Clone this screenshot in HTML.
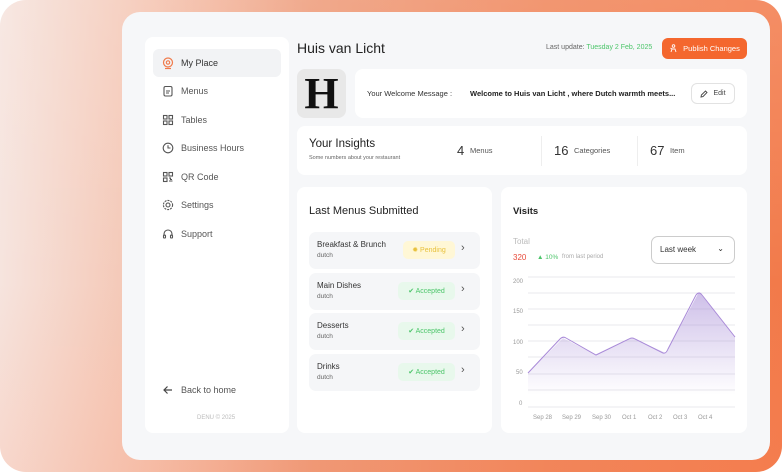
<!DOCTYPE html>
<html><head><meta charset="utf-8"><style>
*{margin:0;padding:0;box-sizing:border-box}
body{width:782px;height:472px;overflow:hidden;background:#fff;font-family:"Liberation Sans",sans-serif;position:relative}
.bg{position:absolute;left:0;top:0;width:782px;height:472px;border-radius:26px;background:linear-gradient(90deg,#f6e4de 0%,#f4c2ae 20%,#ee9a78 40%,#f08458 70%,#f27a4a 100%)}
.bg2{position:absolute;left:0;top:0;width:782px;height:472px;border-radius:26px;background:linear-gradient(180deg,rgba(255,255,255,0.15),rgba(255,255,255,0) 60%,rgba(255,140,100,0.15))}
.panel{position:absolute;left:122px;top:12px;width:648px;height:448px;background:#f6f7f9;border-radius:18px}
.side{position:absolute;left:145px;top:37px;width:144px;height:396px;background:#fff;border-radius:8px}
.nav{position:absolute;left:8px;width:128px;height:28px;display:flex;align-items:center;font-size:9px;color:#555;border-radius:6px}
.nav svg{margin-left:9px;margin-right:7px}
.card{position:absolute;background:#fff;border-radius:8px}
.t{position:absolute;white-space:nowrap}
.row{position:absolute;left:12px;width:171px;height:37px;background:#f5f6f8;border-radius:7px}
.badge{position:absolute;top:9px;height:18px;border-radius:5px;font-size:7px;display:flex;align-items:center;justify-content:center;gap:4px}
.chev{position:absolute;left:152px;top:10px;font-size:11px;color:#555}
</style></head><body>
<div class="bg"></div><div class="bg2"></div>
<div class="panel"></div>
<div class="side">
 <div class="nav" style="top:12px;background:#f2f3f5;color:#333"><svg width="12" height="13" viewBox="0 0 12 13"><circle cx="6" cy="5.5" r="4.5" fill="none" stroke="#f07a4a" stroke-width="1.2"/><circle cx="6" cy="5.5" r="1.7" fill="none" stroke="#f07a4a" stroke-width="1.1"/><path d="M3 11.5h6" stroke="#f07a4a" stroke-width="1.2"/></svg>My Place</div>
 <div class="nav" style="top:40px"><svg width="12" height="12" viewBox="0 0 12 12"><rect x="2" y="1.5" width="8" height="9.5" rx="1.5" fill="none" stroke="#555" stroke-width="1.1"/><path d="M4 6h4M4 8h3" stroke="#555"/></svg>Menus</div>
 <div class="nav" style="top:69px"><svg width="12" height="12" viewBox="0 0 12 12" fill="none" stroke="#555" stroke-width="1.1"><rect x="1.5" y="1.5" width="3.5" height="3.5"/><rect x="7" y="1.5" width="3.5" height="3.5"/><rect x="1.5" y="7" width="3.5" height="3.5"/><rect x="7" y="7" width="3.5" height="3.5"/></svg>Tables</div>
 <div class="nav" style="top:97px"><svg width="12" height="12" viewBox="0 0 12 12" fill="none" stroke="#555" stroke-width="1.1"><circle cx="6" cy="6" r="4.8"/><path d="M6 3.2V6h2.5"/></svg>Business Hours</div>
 <div class="nav" style="top:126px"><svg width="12" height="12" viewBox="0 0 12 12" fill="none" stroke="#555" stroke-width="1.1"><rect x="1.5" y="1.5" width="3.5" height="3.5"/><rect x="7" y="1.5" width="3.5" height="3.5"/><rect x="1.5" y="7" width="3.5" height="3.5"/><path d="M7 7h1.5v1.5H10M7 10h3.5"/></svg>QR Code</div>
 <div class="nav" style="top:154px"><svg width="12" height="12" viewBox="0 0 12 12" fill="none" stroke="#555" stroke-width="1.1"><circle cx="6" cy="6" r="2"/><circle cx="6" cy="6" r="4.6" stroke-dasharray="2 1"/></svg>Settings</div>
 <div class="nav" style="top:183px"><svg width="12" height="12" viewBox="0 0 12 12" fill="none" stroke="#555" stroke-width="1.1"><path d="M2 8V6a4 4 0 0 1 8 0v2"/><rect x="1.5" y="7" width="2" height="3" rx=".8"/><rect x="8.5" y="7" width="2" height="3" rx=".8"/></svg>Support</div>
 <div class="nav" style="top:339px"><svg width="12" height="12" viewBox="0 0 12 12" fill="none" stroke="#444" stroke-width="1.2"><path d="M10 6H2M5.5 2.5 2 6l3.5 3.5"/></svg>Back to home</div>
 <div class="t" style="left:52px;top:378px;font-size:6px;color:#bbb">DENU © 2025</div>
</div>

<div class="t" style="left:297px;top:40px;font-size:14px;color:#222">Huis van Licht</div>
<div class="t" style="left:546px;top:44px;font-size:7px;color:#666">Last update: <span style="color:#4cc56a">Tuesday 2 Feb, 2025</span></div>
<div style="position:absolute;left:662px;top:38px;width:85px;height:21px;background:#f4672e;border-radius:6px;color:#fff;font-size:7.5px;display:flex;align-items:center;justify-content:center;gap:5px"><svg width="9" height="9" viewBox="0 0 9 9" fill="none" stroke="#fff" stroke-width=".9"><circle cx="4.5" cy="2" r="1.3"/><path d="M2 8l1-3h3l1 3M3 5l-1.5-1"/></svg>Publish Changes</div>

<div style="position:absolute;left:297px;top:69px;width:49px;height:49px;background:#e8e8e8;border-radius:8px;font-family:'Liberation Serif',serif;font-weight:bold;font-size:44px;color:#111;text-align:center;line-height:49px">H</div>
<div class="card" style="left:355px;top:69px;width:392px;height:49px">
 <div class="t" style="left:12px;top:20px;font-size:7.5px;color:#333">Your Welcome Message :</div>
 <div class="t" style="left:115px;top:20px;font-size:7.5px;color:#222;font-weight:bold">Welcome to Huis van Licht , where Dutch warmth meets...</div>
 <div style="position:absolute;left:336px;top:14px;width:44px;height:21px;border:1px solid #e2e2e2;border-radius:6px;font-size:7px;color:#444;display:flex;align-items:center;justify-content:center;gap:5px"><svg width="8" height="8" viewBox="0 0 8 8" fill="none" stroke="#444" stroke-width=".9"><path d="M1 7l.4-2L5.5 1 7 2.5 3 6.6z"/></svg>Edit</div>
</div>

<div class="card" style="left:297px;top:126px;width:450px;height:49px">
 <div class="t" style="left:12px;top:12px;font-size:11.5px;color:#222">Your Insights</div>
 <div class="t" style="left:12px;top:29px;font-size:5.5px;color:#666">Some numbers about your restaurant</div>
 <div class="t" style="left:160px;top:17px;font-size:13px;color:#333">4</div><div class="t" style="left:173px;top:20px;font-size:7.5px;color:#555">Menus</div>
 <div style="position:absolute;left:244px;top:10px;width:1px;height:30px;background:#eee"></div>
 <div class="t" style="left:257px;top:17px;font-size:13px;color:#333">16</div><div class="t" style="left:277px;top:20px;font-size:7.5px;color:#555">Categories</div>
 <div style="position:absolute;left:340px;top:10px;width:1px;height:30px;background:#eee"></div>
 <div class="t" style="left:353px;top:17px;font-size:13px;color:#333">67</div><div class="t" style="left:373px;top:20px;font-size:7.5px;color:#555">Item</div>
</div>

<div class="card" style="left:297px;top:187px;width:195px;height:246px">
 <div class="t" style="left:12px;top:18px;font-size:11px;color:#222">Last Menus Submitted</div>
 <div class="row" style="top:45px"><div class="t" style="left:8px;top:8px;font-size:8px;color:#333">Breakfast &amp; Brunch</div><div class="t" style="left:8px;top:20px;font-size:6.5px;color:#666">dutch</div><div class="badge" style="left:94px;width:52px;background:#fff7d6;color:#e8c13c">✹ Pending</div><div class="chev">›</div></div>
 <div class="row" style="top:86px"><div class="t" style="left:8px;top:8px;font-size:8px;color:#333">Main Dishes</div><div class="t" style="left:8px;top:20px;font-size:6.5px;color:#666">dutch</div><div class="badge" style="left:89px;width:57px;background:#e8f8ec;color:#4cc56a">✔ Accepted</div><div class="chev">›</div></div>
 <div class="row" style="top:126px"><div class="t" style="left:8px;top:8px;font-size:8px;color:#333">Desserts</div><div class="t" style="left:8px;top:20px;font-size:6.5px;color:#666">dutch</div><div class="badge" style="left:89px;width:57px;background:#e8f8ec;color:#4cc56a">✔ Accepted</div><div class="chev">›</div></div>
 <div class="row" style="top:167px"><div class="t" style="left:8px;top:8px;font-size:8px;color:#333">Drinks</div><div class="t" style="left:8px;top:20px;font-size:6.5px;color:#666">dutch</div><div class="badge" style="left:89px;width:57px;background:#e8f8ec;color:#4cc56a">✔ Accepted</div><div class="chev">›</div></div>
</div>

<div class="card" style="left:501px;top:187px;width:246px;height:246px">
 <div class="t" style="left:12px;top:19px;font-size:9.5px;color:#222;font-weight:bold">Visits</div>
 <div class="t" style="left:12px;top:50px;font-size:8px;color:#bbb">Total</div>
 <div class="t" style="left:12px;top:66px;font-size:8px;color:#e84a3a">320</div>
 <div class="t" style="left:36px;top:67px;font-size:6.5px;color:#4cc56a">▲ 10%</div>
 <div class="t" style="left:61px;top:67px;font-size:6px;color:#aaa">from last period</div>
 <div style="position:absolute;left:150px;top:49px;width:84px;height:28px;border:1px solid #ccc;border-radius:7px;font-size:8px;color:#333;padding:8px 0 0 8px">Last week<span style="position:absolute;right:10px;top:7px;font-size:8px">⌄</span></div>
</div>
<svg style="position:absolute;left:0;top:0" width="782" height="472">
 <defs><linearGradient id="g" x1="0" y1="0" x2="0" y2="1"><stop offset="0" stop-color="#a58ad6" stop-opacity=".55"/><stop offset="1" stop-color="#a58ad6" stop-opacity="0"/></linearGradient></defs>
 <g stroke="#e8e8ec" stroke-width="1">
  <path d="M528 277H735M528 293H735M528 309H735M528 325H735M528 341H735M528 357H735M528 374H735M528 390H735M528 407H735"/>
 </g>
 <path d="M528 373L563 338L596 355L632 338L666 353L699 292L735 337V395H528Z" fill="url(#g)"/>
 <path d="M528 373L560 339Q563 336 566 338L596 355L629 339Q632 337 635 339L663 353Q666 354 668 349L696 295Q699 291 702 295L735 337" fill="none" stroke="#a98ad8" stroke-width="1"/>
 <g font-family="Liberation Sans,sans-serif" font-size="6" fill="#999">
  <text x="513" y="283">200</text><text x="513" y="313">150</text><text x="513" y="344">100</text><text x="516" y="374">50</text><text x="519" y="405">0</text>
  <text x="533" y="419">Sep 28</text><text x="562" y="419">Sep 29</text><text x="592" y="419">Sep 30</text><text x="622" y="419">Oct 1</text><text x="648" y="419">Oct 2</text><text x="673" y="419">Oct 3</text><text x="698" y="419">Oct 4</text>
 </g>
</svg>
</body></html>
